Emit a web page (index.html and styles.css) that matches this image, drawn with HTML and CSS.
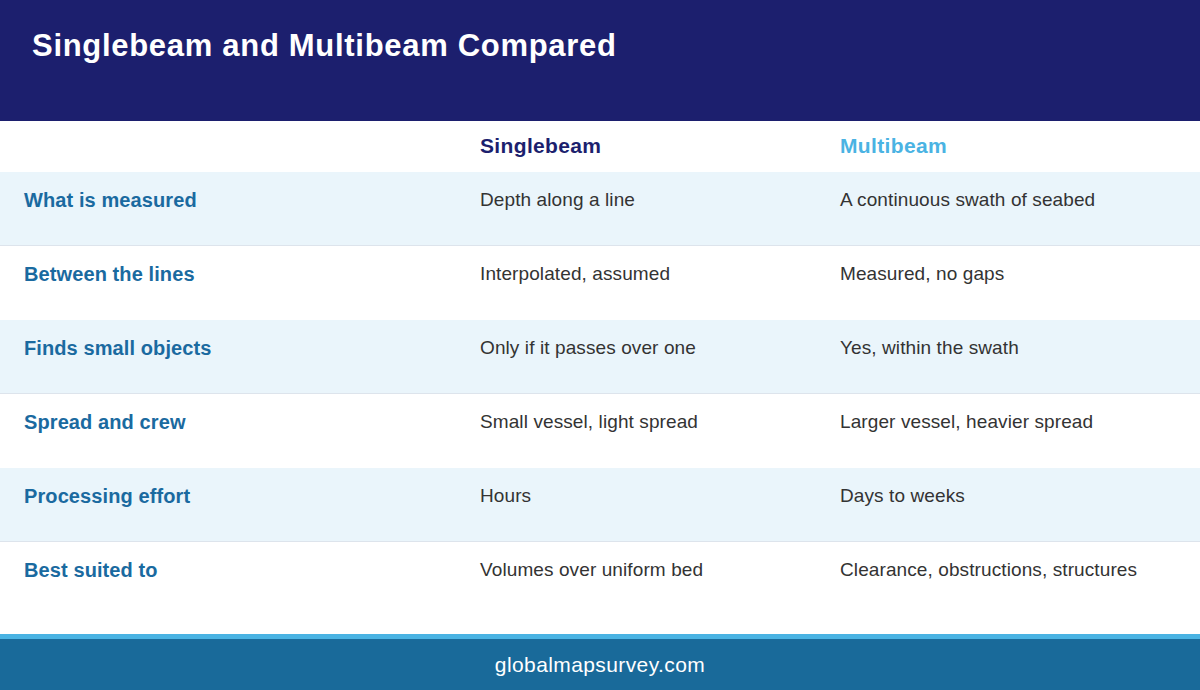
FILE: index.html
```html
<!DOCTYPE html>
<html>
<head>
<meta charset="utf-8">
<link rel="stylesheet" href="styles.css">
</head>
<body>
<div class="page">
  <header class="hero">
    <h1 class="title">Singlebeam and Multibeam Compared</h1>
  </header>
  <main class="table">
    <div class="row head">
      <div class="label"></div>
      <div class="col single">Singlebeam</div>
      <div class="col multi">Multibeam</div>
    </div>
    <div class="row alt">
      <div class="label">What is measured</div>
      <div class="cell">Depth along a line</div>
      <div class="cell">A continuous swath of seabed</div>
    </div>
    <div class="row">
      <div class="label">Between the lines</div>
      <div class="cell">Interpolated, assumed</div>
      <div class="cell">Measured, no gaps</div>
    </div>
    <div class="row alt">
      <div class="label">Finds small objects</div>
      <div class="cell">Only if it passes over one</div>
      <div class="cell">Yes, within the swath</div>
    </div>
    <div class="row">
      <div class="label">Spread and crew</div>
      <div class="cell">Small vessel, light spread</div>
      <div class="cell">Larger vessel, heavier spread</div>
    </div>
    <div class="row alt">
      <div class="label">Processing effort</div>
      <div class="cell">Hours</div>
      <div class="cell">Days to weeks</div>
    </div>
    <div class="row last">
      <div class="label">Best suited to</div>
      <div class="cell">Volumes over uniform bed</div>
      <div class="cell">Clearance, obstructions, structures</div>
    </div>
  </main>
  <footer class="footer">globalmapsurvey.com</footer>
</div>
</body>
</html>
```
FILE: styles.css
```css
* { box-sizing: border-box; }
html, body { margin: 0; padding: 0; }
body {
  font-family: "Liberation Sans", Arial, sans-serif;
  background: #ffffff;
  width: 1200px;
  height: 690px;
  overflow: hidden;
}
.page {
  display: flex;
  flex-direction: column;
  height: 690px;
}
.hero {
  background: #1c1f6e;
  height: 121px;
  padding: 27px 32px 0;
}
.title {
  margin: 0;
  color: #ffffff;
  font-size: 31px;
  letter-spacing: 0.7px;
  font-weight: bold;
  line-height: 38px;
}
.table {
  flex: 1;
  display: flex;
  flex-direction: column;
}
.row {
  display: grid;
  grid-template-columns: 456px 360px 360px;
  padding-left: 24px;
  height: 74px;
  padding-top: 16px;
  font-size: 19px;
  line-height: 24px;
}
.row.head {
  height: 51px;
  padding-top: 13px;
}
.row.alt {
  background: #eaf5fb;
  border-bottom: 1px solid #dde4ec;
}
.row.last {
  flex: 1;
}
.col {
  font-size: 21px;
  letter-spacing: 0.35px;
  font-weight: bold;
  line-height: 24px;
}
.single { color: #1c1f6e; }
.multi { color: #4ab3e3; }
.label {
  color: #1a6aa0;
  font-weight: bold;
  font-size: 20px;
  letter-spacing: 0.1px;
}
.cell {
  color: #333333;
  letter-spacing: 0.1px;
}
.footer {
  height: 56px;
  border-top: 5px solid #4ab3e3;
  background: #196a9a;
  color: #ffffff;
  font-size: 21px;
  letter-spacing: 0.4px;
  text-align: center;
  line-height: 51px;
}
```
